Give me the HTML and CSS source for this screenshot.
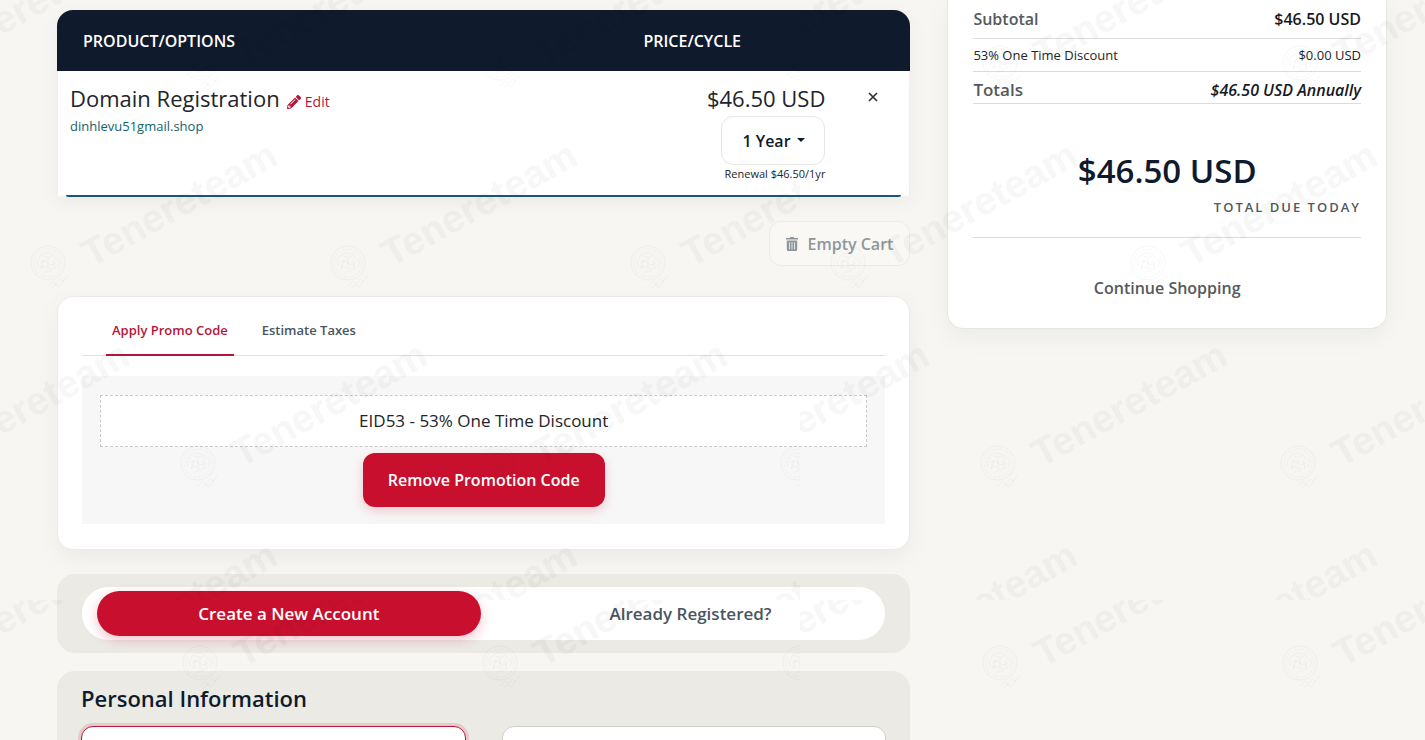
FILE: index.html
```html
<!DOCTYPE html>
<html lang="en">
<head>
    <meta charset="UTF-8">
    <meta name="viewport" content="width=device-width, initial-scale=1.0">
    <title>Review &amp; Checkout</title>
    <link rel="stylesheet" href="styles.css">
</head>
<body>

    <div class="page">
        <main class="cart">
            <!-- Cart items -->
            <div class="cart-items">
                <table class="cart-table">
                    <colgroup>
                        <col>
                        <col class="col-price">
                        <col class="col-remove">
                    </colgroup>
                    <thead>
                        <tr>
                            <th>Product/Options</th>
                            <th colspan="2">Price/Cycle</th>
                        </tr>
                    </thead>
                    <tbody>
                        <tr>
                            <td class="product">
                                <span class="product-name">Domain Registration</span>
                                <a href="#" class="edit-link">
                                    <svg width="14" height="14" viewBox="0 0 512 512" fill="currentColor" aria-hidden="true"><path d="M498 142l-46 46c-5 5-12 5-17 0L324 77c-5-5-5-12 0-17l46-46c19-19 49-19 68 0l60 60c19 19 19 49 0 68zm-214-42L22 362 0 484c-3 16 12 30 28 28l122-22 262-262c5-5 5-12 0-17L301 100c-5-5-12-5-17 0zM124 340c-5-6-5-14 0-20l154-154c6-5 14-5 20 0s5 14 0 20L144 340c-6 5-14 5-20 0zm-36 84h48v36l-64 12-32-32 12-64h36v48z"/></svg>Edit</a>
                                <div class="product-domain">dinhlevu51gmail.shop</div>
                            </td>
                            <td class="price">
                                <div class="price-amount">$46.50 USD</div>
                                <div class="cycle">
                                    <select class="cycle-select" aria-label="Billing cycle">
                                        <option>1 Year</option>
                                        <option>2 Years</option>
                                        <option>3 Years</option>
                                    </select>
                                </div>
                                <div class="renewal">Renewal $46.50/1yr</div>
                            </td>
                            <td class="remove">
                                <button type="button" class="remove-btn" aria-label="Remove">
                                    <svg width="10" height="10" viewBox="0 0 10 10" fill="none" stroke="currentColor" stroke-width="1.7"><path d="M1 1l8 8M9 1l-8 8"/></svg>
                                </button>
                            </td>
                        </tr>
                    </tbody>
                </table>
                <div class="cart-line"></div>
            </div>

            <div class="empty-cart">
                <button type="button" class="empty-btn">
                    <svg width="12" height="14" viewBox="0 0 12 14" fill="currentColor" aria-hidden="true"><path fill-rule="evenodd" d="M0 1h3.500L4.200 0h3.600l.7 1H12v1.600H0zM.8 3.500h10.400V12.500A1.500 1.500 0 0 1 9.700 14H2.300A1.500 1.500 0 0 1 .8 12.500zM3 5.200v7h.8v-7zm2.600 0v7h.8v-7zm2.600 0v7H9v-7z"/></svg>
                    Empty Cart
                </button>
            </div>

            <!-- Promo code -->
            <section class="card">
                <div class="tabs">
                    <button type="button" class="tab active">Apply Promo Code</button>
                    <button type="button" class="tab">Estimate Taxes</button>
                </div>
                <div class="promo">
                    <div class="promo-code">EID53 - 53% One Time Discount</div>
                    <button type="button" class="promo-btn">Remove Promotion Code</button>
                </div>
            </section>

            <!-- New or existing account -->
            <section class="panel account">
                <div class="switch">
                    <button type="button" class="switch-btn active">Create a New Account</button>
                    <button type="button" class="switch-btn">Already Registered?</button>
                </div>
            </section>

            <section class="panel personal">
                <h2>Personal Information</h2>
                <div class="fields">
                    <input type="text" class="field selected" aria-label="First Name">
                    <input type="text" class="field" aria-label="Last Name">
                </div>
            </section>
        </main>

        <!-- Order summary -->
        <aside class="summary">
            <div class="summary-row">
                <span>Subtotal</span>
                <span class="value">$46.50 USD</span>
            </div>
            <div class="summary-row discount">
                <span>53% One Time Discount</span>
                <span>$0.00 USD</span>
            </div>
            <div class="summary-row totals">
                <span class="label">Totals</span>
                <em class="value">$46.50 USD Annually</em>
            </div>
            <div class="total-due">
                <div class="amount">$46.50 USD</div>
                <div class="caption">Total Due Today</div>
            </div>
            <a href="#" class="continue">Continue Shopping</a>
        </aside>
    </div>

    <!-- Watermark -->
    <svg class="watermark" aria-hidden="true">
        <defs>
            <g id="mark">
                <g fill="none" stroke="#000" stroke-opacity="0.035" stroke-width="0.8">
                    <circle r="17"/>
                    <circle r="14" stroke-dasharray="2 2"/>
                    <path d="M-9-5q3-6 9-5t8 6M-8 0q4-4 8 0t8-1M-7 5q3-3 7 0t7-1M-5-8q4 4 9 1M-4 10q4-4 8-1M-10 3q-2-5 1-8M10 4q3-5 0-9M0-4v9M-4-3l-3 9M5-3l2 9"/>
                    <path d="M0 23l5-5 3 4 4-6 3 2 5-6M3 26l4-4 4 2 5-6"/>
                </g>
                <text x="43" y="5" transform="rotate(-29 43 5)">Tenereteam</text>
            </g>
            <pattern id="tile" width="800" height="600" patternUnits="userSpaceOnUse">
                <use href="#mark" x="-100" y="63"/>
                <use href="#mark" x="200" y="63"/>
                <use href="#mark" x="500" y="63"/>
                <use href="#mark" x="800" y="63"/>
                <use href="#mark" x="-250" y="263"/>
                <use href="#mark" x="48" y="263"/>
                <use href="#mark" x="348" y="263"/>
                <use href="#mark" x="648" y="263"/>
                <use href="#mark" x="-100" y="463"/>
                <use href="#mark" x="198" y="463"/>
                <use href="#mark" x="498" y="463"/>
                <use href="#mark" x="798" y="463"/>
                <use href="#mark" x="48" y="663"/>
                <use href="#mark" x="348" y="663"/>
                <use href="#mark" x="648" y="663"/>
            </pattern>
        </defs>
        <rect width="100%" height="100%" fill="url(#tile)"/>
    </svg>

</body>
</html>
```
FILE: styles.css
```css
* {
    box-sizing: border-box;
    margin: 0;
    padding: 0;
}

body {
    font-family: "Open Sans", "Noto Sans", sans-serif;
    font-size: 16px;
    line-height: 24px;
    background-color: #f7f6f2;
    color: #212529;
}

button, select, input {
    font-family: inherit;
    font-size: 16px;
}

button {
    border: none;
    background: none;
    cursor: pointer;
}

a {
    text-decoration: none;
}

.page {
    display: grid;
    grid-template-columns: minmax(0, 33fr) minmax(0, 17fr);
    gap: 37px;
    align-items: start;
    height: 100vh;
    overflow: hidden;
    padding: 0 38px 0 57px;
}

.cart {
    padding-top: 10px;
}

/* Cart items */
.cart-items {
    border-radius: 16px 16px 0 0;
    box-shadow: 0 6px 20px rgba(15, 27, 45, 0.05);
}

.cart-table {
    width: 100%;
    table-layout: fixed;
    border-spacing: 0;
}

.col-price {
    width: 234px;
}

.col-remove {
    width: 59px;
}

.cart-table th {
    height: 61px;
    padding: 0 26px;
    background-color: #0f1a2d;
    color: #fff;
    font-size: 16px;
    font-weight: 600;
    text-align: left;
    text-transform: uppercase;
}

.cart-table th:first-child {
    border-radius: 16px 0 0 0;
}

.cart-table th:last-child {
    border-radius: 0 16px 0 0;
}

.cart-table td {
    height: 124px;
    padding-top: 11px;
    background-color: #fff;
    vertical-align: top;
}

.cart-table .product {
    padding-left: 12px;
    border-left: 1px solid #eeeeec;
}

.product-name {
    margin-right: 3px;
    font-size: 22px;
    line-height: 32px;
}

.edit-link {
    color: #b5153a;
    font-size: 14px;
}

.edit-link svg {
    margin-right: 4px;
    vertical-align: -2px;
}

.product-domain {
    color: #14626a;
    font-size: 13px;
}

.cart-table .price {
    padding-right: 26px;
    text-align: right;
}

.price-amount {
    font-size: 22px;
    line-height: 32px;
}

.cycle {
    position: relative;
    display: inline-block;
    margin-top: 2px;
    vertical-align: top;
}

.cycle::after {
    content: "";
    position: absolute;
    top: 22px;
    right: 20px;
    border: 4px solid transparent;
    border-top-color: #0f1a2d;
    border-bottom: none;
    pointer-events: none;
}

.cycle-select {
    display: block;
    width: 104px;
    height: 49px;
    padding: 0 20px;
    appearance: none;
    border: 1px solid #e6e6e4;
    border-radius: 12px;
    background-color: #fff;
    color: #0f1a2d;
    font-weight: 600;
}

.renewal {
    font-size: 11px;
    line-height: 18px;
}

.cart-table .remove {
    padding-left: 12px;
    border-right: 1px solid #eeeeec;
}

.remove-btn {
    width: 20px;
    height: 28px;
    color: #333;
}

.cart-line {
    height: 2px;
    margin: 0 9px;
    border-radius: 0 0 8px 8px;
    background-color: #17587a;
}

/* Empty cart */
.empty-cart {
    display: flex;
    justify-content: flex-end;
    padding: 24px 0 30px;
}

.empty-btn {
    display: flex;
    align-items: center;
    gap: 10px;
    height: 45px;
    padding: 0 16px;
    border: 1px solid #ecebe8;
    border-radius: 12px;
    background-color: #f9f8f5;
    color: #8f979d;
    font-weight: 600;
}

/* Promo code */
.card {
    padding: 9px 24px 25px;
    border: 1px solid #ebebe8;
    border-radius: 16px;
    background-color: #fff;
    box-shadow: 0 8px 24px rgba(15, 27, 45, 0.05);
}

.tabs {
    display: flex;
    gap: 22px;
    padding-left: 24px;
    border-bottom: 1px solid #dfdfdf;
}

.tab {
    height: 50px;
    margin-bottom: -1px;
    padding: 0 6px;
    border-bottom: 2px solid transparent;
    color: #4a5562;
    font-size: 13px;
    font-weight: 600;
}

.tab.active {
    border-bottom-color: #b5153a;
    color: #b5153a;
}

.promo {
    margin-top: 20px;
    padding: 19px 18px 17px;
    background-color: #f7f7f7;
    text-align: center;
}

.promo-code {
    padding: 13px;
    border: 1px dashed #c8c8c8;
    background-color: #fff;
    font-size: 17px;
}

.promo-btn {
    height: 54px;
    margin-top: 6px;
    padding: 0 25px;
    border-radius: 12px;
    background-color: #c8102e;
    box-shadow: 0 4px 12px rgba(200, 16, 46, 0.2);
    color: #fff;
    font-weight: 600;
    vertical-align: top;
}

/* Account panels */
.panel {
    border-radius: 18px;
    background-color: #ebeae5;
}

.account {
    margin-top: 24px;
    padding: 13px 25px;
}

.switch {
    display: flex;
    gap: 18px;
    padding: 4px 3px 4px 15px;
    border-radius: 27px;
    background-color: #fff;
}

.switch-btn {
    flex: 1;
    height: 45px;
    border-radius: 23px;
    color: #4a5562;
    font-size: 17px;
    font-weight: 600;
}

.switch-btn.active {
    background-color: #c8102e;
    box-shadow: 0 4px 12px rgba(200, 16, 46, 0.25);
    color: #fff;
}

.personal {
    margin-top: 18px;
    padding: 12px 24px 40px;
}

.personal h2 {
    color: #0f1a2d;
    font-size: 22px;
    font-weight: 600;
    line-height: 30px;
}

.fields {
    display: grid;
    grid-template-columns: 1fr 1fr;
    gap: 36px;
    margin-top: 13px;
}

.field {
    width: 100%;
    height: 50px;
    padding: 0 16px;
    border: 1px solid #cfcfca;
    border-radius: 12px;
    background-color: #fff;
}

.field.selected {
    border-color: #b5153a;
    box-shadow: 0 0 0 3px rgba(200, 16, 46, 0.15);
}

/* Order summary */
.summary {
    padding: 0 25px 28px;
    border: 1px solid #e6e6e3;
    border-top: none;
    border-radius: 0 0 16px 16px;
    background-color: #fff;
    box-shadow: 0 8px 24px rgba(15, 27, 45, 0.05);
}

.summary-row {
    display: flex;
    justify-content: space-between;
    align-items: center;
    height: 39px;
    border-bottom: 1px solid #dcdcdc;
    color: #55595d;
    font-weight: 600;
}

.summary-row .value {
    color: #16191f;
}

.summary-row.discount {
    height: 33px;
    color: #212529;
    font-size: 13px;
    font-weight: 400;
}

.summary-row.totals {
    height: 32px;
    padding-top: 4px;
}

.totals .label {
    font-size: 17px;
}

.total-due {
    padding: 43px 0 18px;
    border-bottom: 1px solid #dcdcdc;
}

.amount {
    color: #0f1a2d;
    font-size: 33px;
    font-weight: 600;
    line-height: 48px;
    text-align: center;
}

.caption {
    color: #55595d;
    font-size: 13px;
    font-weight: 600;
    letter-spacing: 2px;
    text-align: right;
    text-transform: uppercase;
}

.continue {
    display: block;
    margin-top: 38px;
    color: #55595d;
    font-weight: 600;
    text-align: center;
}

/* Watermark */
.watermark {
    position: fixed;
    top: 0;
    left: 0;
    width: 100%;
    height: 100%;
    pointer-events: none;
}

.watermark text {
    font-family: "Liberation Sans", Arial, sans-serif;
    font-size: 39px;
    font-weight: bold;
    fill: rgba(0, 0, 0, 0.03);
}
```
